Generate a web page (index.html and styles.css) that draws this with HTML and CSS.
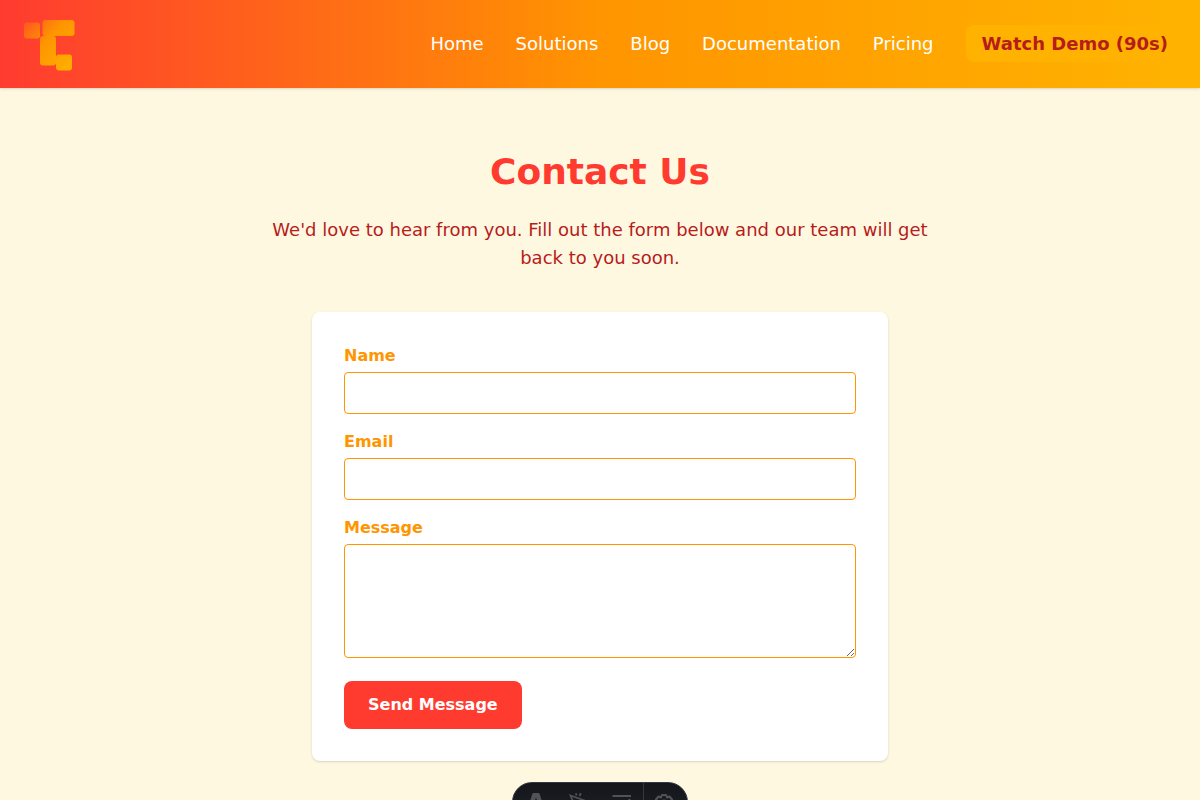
FILE: index.html
```html
<!DOCTYPE html>
<html lang="en">
<head>
<meta charset="utf-8">
<meta name="viewport" content="width=device-width, initial-scale=1">
<title>Contact Us</title>
<link rel="stylesheet" href="styles.css">
</head>
<body>
<header class="site-header">
  <a class="logo" href="#" aria-label="Home page">
    <svg width="56" height="56" viewBox="0 0 56 56" aria-hidden="true">
      <defs>
        <linearGradient id="logo-fill" gradientUnits="userSpaceOnUse" x1="-8" y1="-4" x2="52" y2="54">
          <stop offset="0" stop-color="#ff3b30"/>
          <stop offset="0.5" stop-color="#ff9500"/>
          <stop offset="1" stop-color="#ffb300"/>
        </linearGradient>
      </defs>
      <g fill="url(#logo-fill)">
        <rect x="0" y="6.500" width="16" height="16" rx="3"/>
        <rect x="18.500" y="4" width="32" height="16" rx="3"/>
        <rect x="16" y="20" width="16" height="29.500" rx="3"/>
        <rect x="32" y="38.500" width="16" height="16" rx="3"/>
      </g>
    </svg>
  </a>
  <nav>
    <ul class="nav-list">
      <li><a class="nav-link" href="#">Home</a></li>
      <li><a class="nav-link" href="#">Solutions</a></li>
      <li><a class="nav-link" href="#">Blog</a></li>
      <li><a class="nav-link" href="#">Documentation</a></li>
      <li><a class="nav-link" href="#">Pricing</a></li>
      <li><a class="nav-demo" href="#">Watch Demo (90s)</a></li>
    </ul>
  </nav>
</header>
<main class="contact">
  <h1 class="title">Contact Us</h1>
  <p class="intro">We'd love to hear from you. Fill out the form below and our team will get back to you soon.</p>
  <form class="card">
    <div class="field">
      <label class="label" for="name">Name</label>
      <input class="control" id="name" name="name" type="text">
    </div>
    <div class="field">
      <label class="label" for="email">Email</label>
      <input class="control" id="email" name="email" type="email">
    </div>
    <div class="field">
      <label class="label" for="message">Message</label>
      <textarea class="control" id="message" name="message" rows="4"></textarea>
    </div>
    <button class="submit" type="submit">Send Message</button>
  </form>
</main>
<div class="dev-bar">
  <button class="dev-item" type="button" aria-label="Menu">
    <svg width="16" height="20" viewBox="0 0 16 20" fill="currentColor"><path d="M4.200 2.200Q4.600 1 5.800 1H10.200Q11.400 1 11.800 2.200L16 16Q13.200 14.800 11.200 14.500L8 5.500 4.800 14.500Q2.800 14.800 0 16Z"/></svg>
  </button>
  <button class="dev-item" type="button" aria-label="Inspect">
    <svg width="20" height="20" viewBox="0 0 20 20" fill="none" stroke="currentColor" stroke-width="1.800"><path d="M1.500 3.500 15.500 8.500 10.500 12 7.500 17.500ZM7.500 3.500 6.800 1.200M10.500 4 11.800 1.200"/></svg>
  </button>
  <button class="dev-item" type="button" aria-label="Audit">
    <svg width="20" height="20" viewBox="0 0 20 20" fill="none" stroke="currentColor" stroke-width="2"><path d="M0.500 4H19M0.500 11H9M0.500 18H9M11 12 13 14 18 7"/></svg>
  </button>
  <button class="dev-item dev-settings" type="button" aria-label="Settings">
    <svg width="20" height="20" viewBox="0 0 20 20" fill="none" stroke="currentColor" stroke-width="2" stroke-linejoin="round"><path d="M7 3H11L12 5.500 14.500 4.500 17 7.500 15.500 9.500 17.500 11V14L15 15 15.500 17.500 12.500 19 11 18H7L5.500 19 2.500 17.500 3 15 0.500 14V11L2.500 9.500 1 7.500 3.500 4.500 6 5.500Z"/><circle cx="9" cy="12" r="3.500"/></svg>
  </button>
</div>
</body>
</html>
```
FILE: styles.css
```css
* {
  box-sizing: border-box;
}

body {
  margin: 0;
  background: #fff8e1;
  color: #b71c1c;
  font-family: "DejaVu Sans", sans-serif;
  font-size: 16px;
  line-height: 24px;
}

.site-header {
  display: flex;
  align-items: center;
  justify-content: space-between;
  padding: 16px 16px 16px 24px;
  background: linear-gradient(90deg, #ff3b30, #ff9500 50%, #ffb300);
  box-shadow: 0 1px 3px rgba(0, 0, 0, 0.1), 0 1px 2px rgba(0, 0, 0, 0.06);
}

.logo,
.logo svg {
  display: block;
}

.nav-list {
  display: flex;
  align-items: center;
  gap: 32px;
  margin: 0;
  padding: 0;
  list-style: none;
  font-size: 18px;
  line-height: 28px;
}

.nav-link {
  color: #fff;
  text-decoration: none;
}

.nav-demo {
  padding: 8px 16px;
  border-radius: 8px;
  background: #ffb300;
  color: #b71c1c;
  font-weight: 700;
  text-decoration: none;
}

.contact {
  display: flex;
  flex-direction: column;
  align-items: center;
  padding: 64px 24px;
}

.title {
  margin: 0 0 24px;
  color: #ff3b30;
  font-size: 36px;
  line-height: 40px;
}

.intro {
  max-width: 672px;
  margin: 0 0 40px;
  font-size: 18px;
  line-height: 28px;
  text-align: center;
}

.card {
  display: flex;
  flex-direction: column;
  align-items: flex-start;
  gap: 16px;
  width: 100%;
  max-width: 576px;
  padding: 32px;
  border-radius: 8px;
  background: #fff;
  box-shadow: 0 1px 3px rgba(0, 0, 0, 0.1), 0 1px 2px rgba(0, 0, 0, 0.06);
}

.field {
  display: flex;
  flex-direction: column;
  gap: 4px;
  width: 100%;
}

.label {
  color: #ff9500;
  font-weight: 700;
}

.control {
  display: block;
  width: 100%;
  padding: 8px 12px;
  border: 1px solid #ff9500;
  border-radius: 4px;
  background: #fff;
  color: #b71c1c;
  font: inherit;
}

.submit {
  margin-top: 7px;
  padding: 12px 24px;
  border: 0;
  border-radius: 8px;
  background: #ff3b30;
  color: #fff;
  font: inherit;
  font-weight: 700;
}

.dev-bar {
  position: fixed;
  bottom: -22px;
  left: 50%;
  display: flex;
  height: 40px;
  padding: 0 1px;
  overflow: hidden;
  transform: translateX(-50%);
  border: 1px solid #343841;
  border-radius: 20px;
  background: linear-gradient(180deg, #13151a, #1f2228);
}

.dev-item {
  display: flex;
  align-items: center;
  justify-content: center;
  width: 43px;
  padding: 0;
  border: 0;
  background: transparent;
  color: #505258;
}

.dev-settings {
  border-left: 1px solid #343841;
}
```
